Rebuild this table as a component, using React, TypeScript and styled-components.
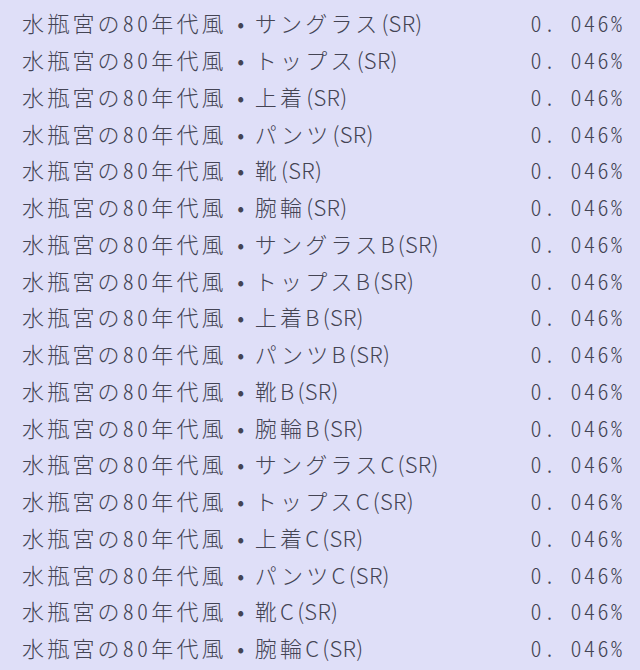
import * as React from 'react';
import styled, { createGlobalStyle } from 'styled-components';

const GlobalStyle = createGlobalStyle`
    html, body {
        margin: 0;
        padding: 0;
        background: #dfdff8;
    }
`;

const List = styled.div`
    width: 640px;
    height: 670px;
    box-sizing: border-box;
    padding: 4px 18px 0 22px;
    background: #dfdff8;
    color: #444454;
    font-family: 'Noto Sans CJK JP', 'Noto Sans', sans-serif;
    font-size: 22px;
    font-weight: 300;
    font-feature-settings: 'hwid';
    letter-spacing: 3.2px;
    overflow: hidden;
`;

const Row = styled.div`
    display: flex;
    justify-content: space-between;
    align-items: center;
    height: 36.76px;
    white-space: nowrap;
`;

const Name = styled.span`
    display: flex;
    align-items: center;
`;

const Dot = styled.span`
    display: inline-block;
    width: 28px;
    text-align: center;
    letter-spacing: 0;
`;

// rarity tag and the B / C letters are set proportional, tighter
const Latin = styled.span<{ $gap?: number }>`
    font-feature-settings: normal;
    letter-spacing: 0.3px;
    margin-left: ${(p) => p.$gap ?? 0}px;
`;

const Rate = styled.span`
    letter-spacing: 2.5px;
    margin-right: -2.5px;
`;

const Point = styled.span`
    margin-right: 13px;
`;

const parts = ['サングラス', 'トップス', '上着', 'パンツ', '靴', '腕輪'];
const suffixes = ['', 'B', 'C'];

const items = suffixes.flatMap((s) => parts.map((p) => ({ part: p, suffix: s })));

const App = () => (
    <>
        <GlobalStyle />
        <List>
            {items.map((item) => (
                <Row key={item.part + item.suffix}>
                    <Name>
                        水瓶宮の80年代風<Dot>•</Dot>
                        {item.part}
                        {item.suffix && <Latin>{item.suffix}</Latin>}
                        <Latin $gap={item.suffix ? 3 : 1}>(SR)</Latin>
                    </Name>
                    <Rate>
                        0<Point>.</Point>046%
                    </Rate>
                </Row>
            ))}
        </List>
    </>
);

export default App;
